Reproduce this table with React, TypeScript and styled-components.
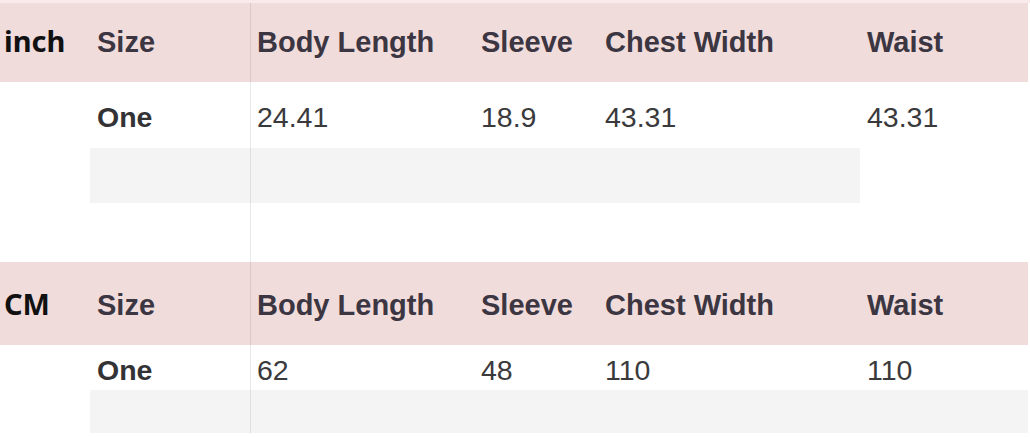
import React from "react";
import styled, { createGlobalStyle } from "styled-components";

const GlobalStyle = createGlobalStyle`
  html, body {
    margin: 0;
    padding: 0;
    background: #ffffff;
  }
`;

const COLUMNS = "90px 160px 224px 124px 262px 168px 2px";
const SANS = `"Liberation Sans", Arial, Helvetica, sans-serif`;

const Page = styled.div`
  width: 1030px;
  height: 437px;
  overflow: hidden;
  background: #ffffff;
  padding-top: 3px;
  box-sizing: border-box;
  box-shadow: inset 0 3px 0 #f9ebeb;
  font-family: ${SANS};
`;

const Row = styled.div<{ $h: number; $pt?: number }>`
  display: grid;
  grid-template-columns: ${COLUMNS};
  height: ${(p) => p.$h}px;

  & > * {
    padding-top: ${(p) => p.$pt || 0}px;
  }

  & > :nth-child(3) {
    box-shadow: inset 1px 0 0 rgba(0, 0, 0, 0.09);
  }
`;

const Cell = styled.div<{ $bg?: string }>`
  display: flex;
  align-items: center;
  box-sizing: border-box;
  padding-left: 7px;
  background: ${(p) => p.$bg || "transparent"};
  font-family: ${SANS};
  font-size: 28.5px;
  color: #3a3a3c;
  white-space: nowrap;
  overflow: hidden;
`;

const HeadCell = styled(Cell)`
  font-size: 29px;
  font-weight: 700;
  color: #3b3641;
`;

const UnitCell = styled(Cell)`
  padding-left: 4px;
  padding-bottom: 5px;
  font-family: "Noto Sans", sans-serif;
  font-weight: 700;
  font-size: 29px;
  color: #111111;
`;

const SizeCell = styled(Cell)`
  font-weight: 700;
  color: #333336;
`;

const PINK = "#f1dcdc";
const GRAY = "#f4f4f4";

const HEADERS = ["Size", "Body Length", "Sleeve", "Chest Width", "Waist"];

type Block = {
  unit: string;
  values: string[];
  heights: [number, number, number, number];
  grayCols: number;
  headPad: number;
  dataPad: number;
};

const BLOCKS: Block[] = [
  { unit: "inch", values: ["24.41", "18.9", "43.31", "43.31"], heights: [79, 66, 55, 59], grayCols: 4, headPad: 0, dataPad: 4 },
  { unit: "CM", values: ["62", "48", "110", "110"], heights: [83, 45, 43, 0], grayCols: 6, headPad: 4, dataPad: 5 },
];

const SizeBlock = ({ block }: { block: Block }) => {
  const [head, data, gray, spacer] = block.heights;
  return (
    <>
      <Row $h={head} $pt={block.headPad}>
        <UnitCell $bg={PINK}>{block.unit}</UnitCell>
        {HEADERS.map((h) => (
          <HeadCell key={h} $bg={PINK}>
            {h}
          </HeadCell>
        ))}
        <Cell />
      </Row>
      <Row $h={data} $pt={block.dataPad}>
        <Cell />
        <SizeCell>One</SizeCell>
        {block.values.map((v, i) => (
          <Cell key={i}>{v}</Cell>
        ))}
        <Cell />
      </Row>
      <Row $h={gray}>
        <Cell />
        {[0, 1, 2, 3, 4, 5].map((i) => (
          <Cell key={i} $bg={i < block.grayCols && i < 5 ? GRAY : undefined} />
        ))}
      </Row>
      {spacer > 0 && (
        <Row $h={spacer}>
          {[0, 1, 2, 3, 4, 5, 6].map((i) => (
            <Cell key={i} />
          ))}
        </Row>
      )}
    </>
  );
};

export default function App() {
  return (
    <>
      <GlobalStyle />
      <Page>
        {BLOCKS.map((b) => (
          <SizeBlock key={b.unit} block={b} />
        ))}
      </Page>
    </>
  );
}
